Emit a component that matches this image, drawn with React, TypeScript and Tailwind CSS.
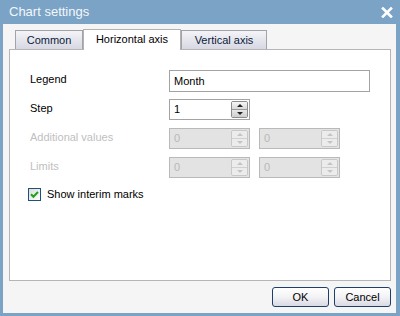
import type { ReactNode } from "react"

const FONT = { fontFamily: '"Liberation Sans", Arial, sans-serif' }

/** Small XP-style spin box: value on the left, up/down arrows stacked on the right. */
function Spinner({ value, disabled }: { value: string; disabled?: boolean }) {
  return (
    <div
      className={
        disabled
          ? "flex h-[21px] w-[81px] items-stretch border border-[#b9b9b9] bg-[#e3e3e3]"
          : "flex h-[21px] w-[81px] items-stretch border border-[#a3a3a3] bg-white"
      }
    >
      <span
        className={
          disabled
            ? "flex flex-1 items-center pl-[4px] text-[11px] text-[#b8b8b8]"
            : "flex flex-1 items-center pl-[4px] text-[11px] text-black"
        }
      >
        {value}
      </span>
      <div
        className={
          disabled
            ? "my-[1px] mr-[1px] flex w-[17px] flex-col overflow-hidden rounded-[2px] border border-[#c8c8c8]"
            : "my-[1px] mr-[1px] flex w-[17px] flex-col overflow-hidden rounded-[2px] border border-[#8c8c8c]"
        }
      >
        <div
          className={
            disabled
              ? "flex flex-1 items-center justify-center border-b border-[#d0d0d0] bg-[#ececec]"
              : "flex flex-1 items-center justify-center border-b border-[#9a9a9a] bg-gradient-to-b from-[#f7f7f7] to-[#d9d9d9]"
          }
        >
          <span
            className={
              disabled
                ? "h-0 w-0 border-x-[3px] border-b-[3px] border-x-transparent border-b-[#c4c4c4]"
                : "h-0 w-0 border-x-[3px] border-b-[3px] border-x-transparent border-b-[#222]"
            }
          />
        </div>
        <div
          className={
            disabled
              ? "flex flex-1 items-center justify-center bg-[#ececec]"
              : "flex flex-1 items-center justify-center bg-gradient-to-b from-[#e8e8e8] to-[#cfcfcf]"
          }
        >
          <span
            className={
              disabled
                ? "h-0 w-0 border-x-[3px] border-t-[3px] border-x-transparent border-t-[#c4c4c4]"
                : "h-0 w-0 border-x-[3px] border-t-[3px] border-x-transparent border-t-[#222]"
            }
          />
        </div>
      </div>
    </div>
  )
}

function Row({ label, disabled, children }: { label: string; disabled?: boolean; children: ReactNode }) {
  return (
    <div className="flex h-[29px] items-start">
      <span
        className={
          disabled
            ? "flex h-[19px] w-[139px] items-center text-[11px] text-[#c0c0c0]"
            : "flex h-[19px] w-[139px] items-center text-[11px] text-black"
        }
      >
        {label}
      </span>
      {children}
    </div>
  )
}

function DlgButton({ children }: { children: ReactNode }) {
  return (
    <button
      type="button"
      className="h-[20px] w-[57px] rounded-[3px] border border-[#1f3f6b] bg-gradient-to-b from-white via-[#f3f3f6] to-[#d9dae3] text-[11px] text-black"
    >
      {children}
    </button>
  )
}

export default function App() {
  return (
    <div className="flex h-[316px] w-[400px] flex-col bg-[#7aa3c6]" style={FONT}>
      {/* title bar */}
      <div className="flex h-[24px] items-center justify-between pl-[9px] pr-[7px]">
        <span className="text-[13px] text-[#f4f7fa]">Chart settings</span>
        <svg width="12" height="11" viewBox="0 0 12 11" aria-hidden>
          <path d="M2 1.5 L10 9.5 M10 1.5 L2 9.5" stroke="#fff" strokeWidth="2.6" strokeLinecap="square" />
        </svg>
      </div>

      {/* body */}
      <div className="mb-[3px] ml-[3px] mr-[4px] flex flex-1 flex-col bg-[#f5f5f5] pl-[6px] pr-[5px] pt-[5px]">
        {/* tabs */}
        <div className="relative z-10 flex h-[20px] items-end pl-[6px]">
          <div className="flex h-[19px] w-[68px] items-center justify-center border border-b-0 border-[#a2a2a8] bg-gradient-to-b from-[#f4f4f8] to-[#d6d8e2] text-[11px] text-[#0a1a3a]">
            Common
          </div>
          <div className="mb-[-1px] flex h-[21px] w-[98px] items-center justify-center border border-b-0 border-[#b2b2b2] bg-white pb-[1px] text-[11px] text-black">
            Horizontal axis
          </div>
          <div className="flex h-[19px] w-[86px] items-center justify-center border border-b-0 border-[#a2a2a8] bg-gradient-to-b from-[#f4f4f8] to-[#d6d8e2] text-[11px] text-[#0a1a3a]">
            Vertical axis
          </div>
        </div>

        {/* tab panel */}
        <div className="flex h-[232px] flex-col border border-[#b5b5b5] bg-white pl-[20px] pt-[20px]">
          <Row label="Legend">
            <div className="flex h-[22px] w-[201px] items-center border border-[#a3a3a3] bg-white pl-[4px] text-[11px] text-black">
              Month
            </div>
          </Row>
          <Row label="Step">
            <Spinner value="1" />
          </Row>
          <Row label="Additional values" disabled>
            <div className="flex gap-[9px]">
              <Spinner value="0" disabled />
              <Spinner value="0" disabled />
            </div>
          </Row>
          <Row label="Limits" disabled>
            <div className="flex gap-[9px]">
              <Spinner value="0" disabled />
              <Spinner value="0" disabled />
            </div>
          </Row>
          <div className="flex items-center gap-[6px] pl-[-2px]">
            <div className="-ml-[2px] mt-[1px] flex h-[13px] w-[13px] items-center justify-center border border-[#1c5180] bg-gradient-to-br from-[#dcdcd7] to-white">
              <svg width="9" height="9" viewBox="0 0 9 9" aria-hidden>
                <path d="M1 4.3 L3.4 6.8 L8 2" fill="none" stroke="#21a121" strokeWidth="2" />
              </svg>
            </div>
            <span className="text-[11px] text-black">Show interim marks</span>
          </div>
        </div>

        {/* footer buttons */}
        <div className="flex justify-end gap-[5px] pt-[6px]">
          <DlgButton>OK</DlgButton>
          <DlgButton>Cancel</DlgButton>
        </div>
      </div>
    </div>
  )
}
